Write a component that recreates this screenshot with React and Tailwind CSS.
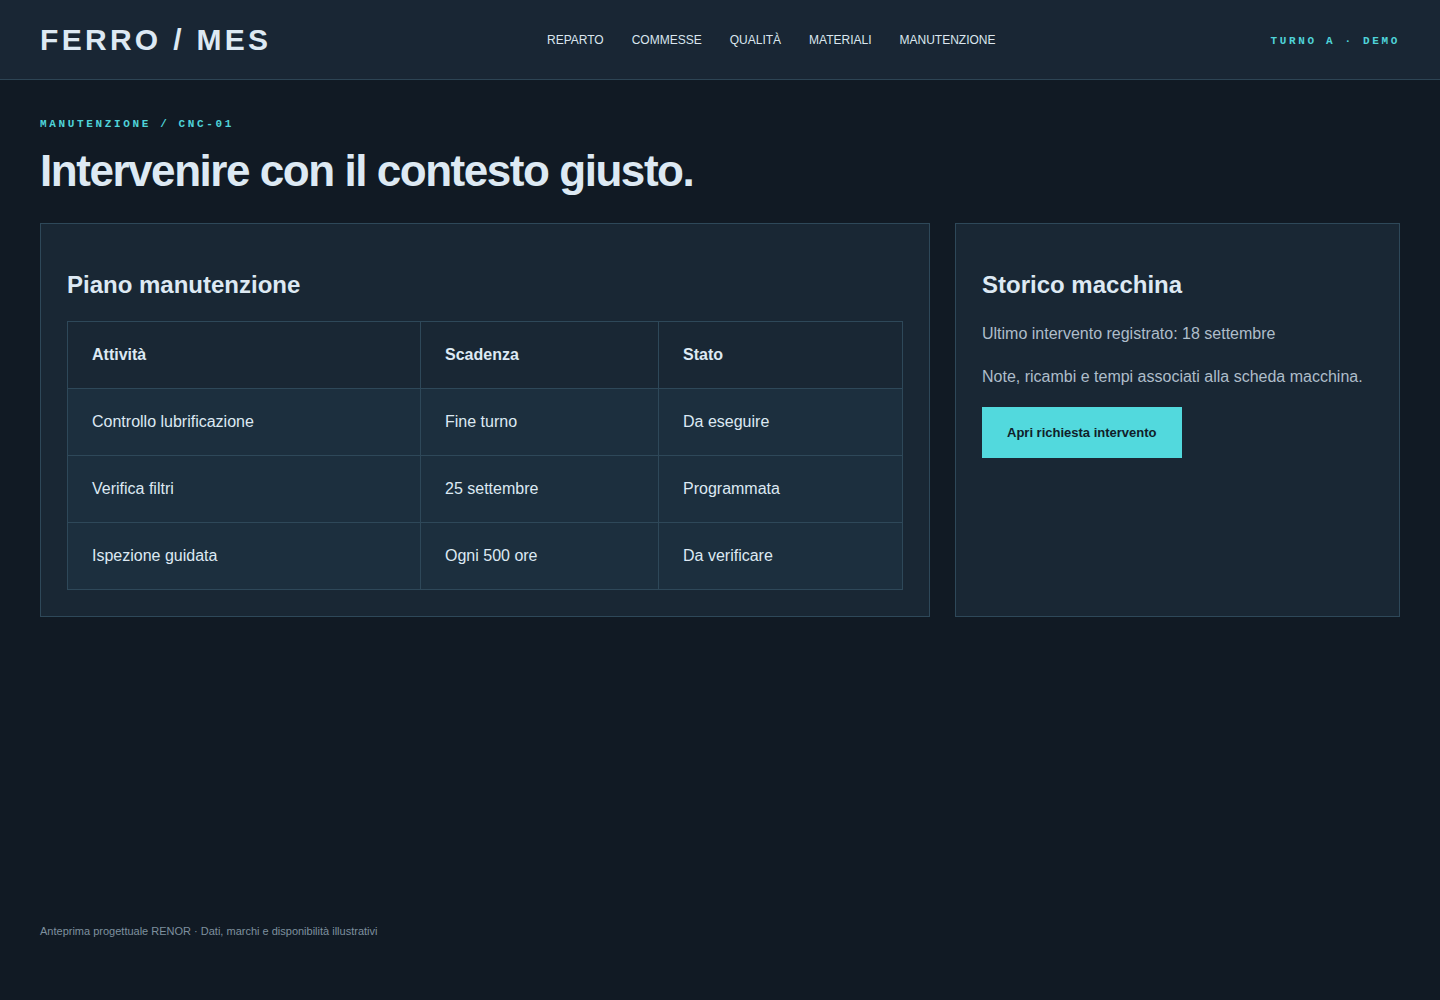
const NAV = ['Reparto', 'Commesse', 'Qualità', 'Materiali', 'Manutenzione'];

const TASKS = [
  { attivita: 'Controllo lubrificazione', scadenza: 'Fine turno', stato: 'Da eseguire' },
  { attivita: 'Verifica filtri', scadenza: '25 settembre', stato: 'Programmata' },
  { attivita: 'Ispezione guidata', scadenza: 'Ogni 500 ore', stato: 'Da verificare' },
];

const sans = "font-['Liberation_Sans',Arial,sans-serif]";
const mono = "font-['Liberation_Mono','Courier_New',monospace]";

function Header() {
  return (
    <header className="h-[80px] bg-[#192634] border-b border-[#2d4454] px-10 flex items-center">
      <div className="w-[507px] text-[30px] font-bold tracking-[0.11em] text-[#dde9f3] leading-none">FERRO / MES</div>
      <nav className="flex items-center gap-7">
        {NAV.map((item) => (
          <a key={item} className="text-[12px] uppercase text-[#dbe6ef]">
            {item}
          </a>
        ))}
      </nav>
      <div className={`${mono} ml-auto mt-[3px] text-[11px] font-bold tracking-[0.24em] text-[#4fd3d9]`}>TURNO A · DEMO</div>
    </header>
  );
}

function Card({ title, children }) {
  return (
    <section className="self-stretch bg-[#192734] border border-[#2e4859] px-[26px] pb-[26px] pt-[26px]">
      <h2 className="mt-5 mb-[22px] text-[24px] font-bold leading-[29px] text-[#dde9f3]">{title}</h2>
      {children}
    </section>
  );
}

export default function App() {
  return (
    <div className={`${sans} min-h-screen flex flex-col bg-[#111a24] text-[#dde9f3]`}>
      <Header />

      <main className="flex-1 px-10 pt-[36px]">
        <div className={`${mono} text-[11px] font-bold tracking-[0.24em] text-[#4fd3d9] leading-4`}>
          MANUTENZIONE / CNC-01
        </div>
        <h1 className="mt-[14px] text-[44px] font-bold leading-[50px] tracking-[-0.033em] text-[#dde9f3]">
          Intervenire con il contesto giusto.
        </h1>

        <div className="mt-[27px] grid grid-cols-[2fr_1fr] gap-[25px] items-start">
          <Card title="Piano manutenzione">
            {/* tabella attività */}
            <table className="w-full border-collapse border border-[#2e4859] text-[16px]">
              <colgroup>
                <col className="w-[353px]" />
                <col className="w-[238px]" />
                <col />
              </colgroup>
              <thead>
                <tr className="h-[67px]">
                  {['Attività', 'Scadenza', 'Stato'].map((h) => (
                    <th key={h} className="border border-[#2e4859] px-6 text-left font-bold text-[#dde9f3]">
                      {h}
                    </th>
                  ))}
                </tr>
              </thead>
              <tbody>
                {TASKS.map((t) => (
                  <tr key={t.attivita} className="h-[67px] bg-[#1c2f3e]">
                    <td className="border border-[#2e4859] px-6 text-[#dde9f3]">{t.attivita}</td>
                    <td className="border border-[#2e4859] px-6 text-[#dde9f3]">{t.scadenza}</td>
                    <td className="border border-[#2e4859] px-6 text-[#dde9f3]">{t.stato}</td>
                  </tr>
                ))}
              </tbody>
            </table>
          </Card>

          <Card title="Storico macchina">
            <p className="text-[16px] leading-[26px] text-[#aebdca]">Ultimo intervento registrato: 18 settembre</p>
            <p className="mt-[17px] text-[16px] leading-[26px] text-[#aebdca]">
              Note, ricambi e tempi associati alla scheda macchina.
            </p>
            <button className="mt-[17px] h-[51px] px-[25px] bg-[#52d9dd] text-[13px] font-bold text-[#102029]">
              Apri richiesta intervento
            </button>
          </Card>
        </div>
      </main>

      <footer className="px-10 pb-[61px] text-[11px] text-[#7e909e]">
        Anteprima progettuale RENOR · Dati, marchi e disponibilità illustrativi
      </footer>
    </div>
  );
}
